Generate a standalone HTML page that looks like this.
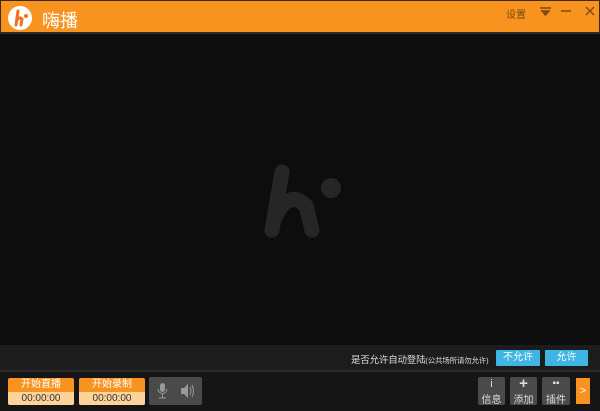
<!DOCTYPE html>
<html><head><meta charset="utf-8"><style>
*{margin:0;padding:0;box-sizing:border-box}
body{width:600px;height:411px;background:#0d0d0d;font-family:"Liberation Sans","Noto Sans CJK SC",sans-serif;position:relative;overflow:hidden}
.a{position:absolute}
#title{left:0;top:0;width:600px;height:34px;background:#f7931e;border:1px solid #3a2a10;border-bottom:2px solid #2a2a2a}
.ob{background:#f7931e;color:#fff;font-size:10px;text-align:center;border-radius:2px;overflow:hidden}
.ob div:first-child{height:14px;line-height:14px}
.ob div:last-child{height:13px;line-height:13px;background:#fcd39b;color:#333}
.tb{background:#4a4a4a;border-radius:2px;color:#ddd;font-size:10px;text-align:center}
.bb{background:#3fb5e6;color:#fff;font-size:10px;text-align:center;line-height:16px;border-radius:1px}
</style></head><body>
<div id="title" class="a">
 <div class="a" style="left:7px;top:5px;width:24px;height:24px;border-radius:50%;background:#fff"></div>
 <svg class="a" style="left:7px;top:5px" width="24" height="24"><path d="M10 5 L8 19 M8.5 15 Q11 10 14 13 L13 19" stroke="#f36f21" stroke-width="3" fill="none" stroke-linecap="round"/><circle cx="18" cy="10" r="2" fill="#f36f21"/></svg>
 <div class="a" style="left:41px;top:6px;color:#fff;font-size:18px">嗨播</div>
 <div class="a" style="left:505px;top:5px;color:#7a4a10;font-size:10px">设置</div>
 <svg class="a" style="left:538px;top:4px" width="62" height="14"><path d="M1 3h11M3 6h7l-3.5 4z" stroke="#7a4a10" fill="#7a4a10" stroke-width="1.5"/><path d="M22 6h10" stroke="#7a4a10" stroke-width="1.5"/><path d="M47 2l8 8M55 2l-8 8" stroke="#7a4a10" stroke-width="1.3"/></svg>
</div>
<svg class="a" style="left:250px;top:150px" width="100" height="100"><path d="M32 22 L22 80 M24 70 Q38 38 56 56 L62 80" stroke="#262626" stroke-width="15" fill="none" stroke-linecap="round"/><circle cx="81" cy="38" r="10" fill="#262626"/></svg>
<div class="a" style="left:0;top:345px;width:600px;height:25px;background:#1c1c1c"></div>
<div class="a" style="left:351px;top:352px;color:#ddd;font-size:9.5px;white-space:nowrap;letter-spacing:-0.2px">是否允许自动登陆<span style="font-size:7.5px">(公共场所请勿允许)</span></div>
<div class="a bb" style="left:496px;top:350px;width:44px;height:16px">不允许</div>
<div class="a bb" style="left:545px;top:350px;width:43px;height:16px">允许</div>
<div class="a" style="left:0;top:370px;width:600px;height:2px;background:#2c2c2c"></div>
<div class="a" style="left:0;top:372px;width:600px;height:39px;background:#151515"></div>
<div class="a ob" style="left:8px;top:378px;width:66px;height:27px"><div>开始直播</div><div>00:00:00</div></div>
<div class="a ob" style="left:79px;top:378px;width:66px;height:27px"><div>开始录制</div><div>00:00:00</div></div>
<div class="a tb" style="left:149px;top:377px;width:53px;height:28px"><svg width="53" height="28"><rect x="11" y="6" width="5" height="9" rx="2.5" fill="#999"/><path d="M9 12a4.5 4.5 0 0 0 9 0M13.5 17v4M10 21h7" stroke="#999" fill="none"/><path d="M32 11h3l4-4v14l-4-4h-3z" fill="#999"/><path d="M41 10q2 4 0 8M43 8q3 6 0 12" stroke="#999" fill="none"/></svg></div>
<div class="a tb" style="left:478px;top:377px;width:27px;height:28px"><div style="line-height:14px;font-size:11px">i</div><div>信息</div></div>
<div class="a tb" style="left:510px;top:377px;width:27px;height:28px"><div style="line-height:14px;font-size:15px;font-weight:bold">+</div><div>添加</div></div>
<div class="a tb" style="left:542px;top:377px;width:28px;height:28px"><div style="line-height:14px;font-size:10px">▪▪</div><div>插件</div></div>
<div class="a" style="left:576px;top:378px;width:14px;height:26px;background:#f7931e;color:#fff;font-size:11px;text-align:center;line-height:26px">&gt;</div>
</body></html>
